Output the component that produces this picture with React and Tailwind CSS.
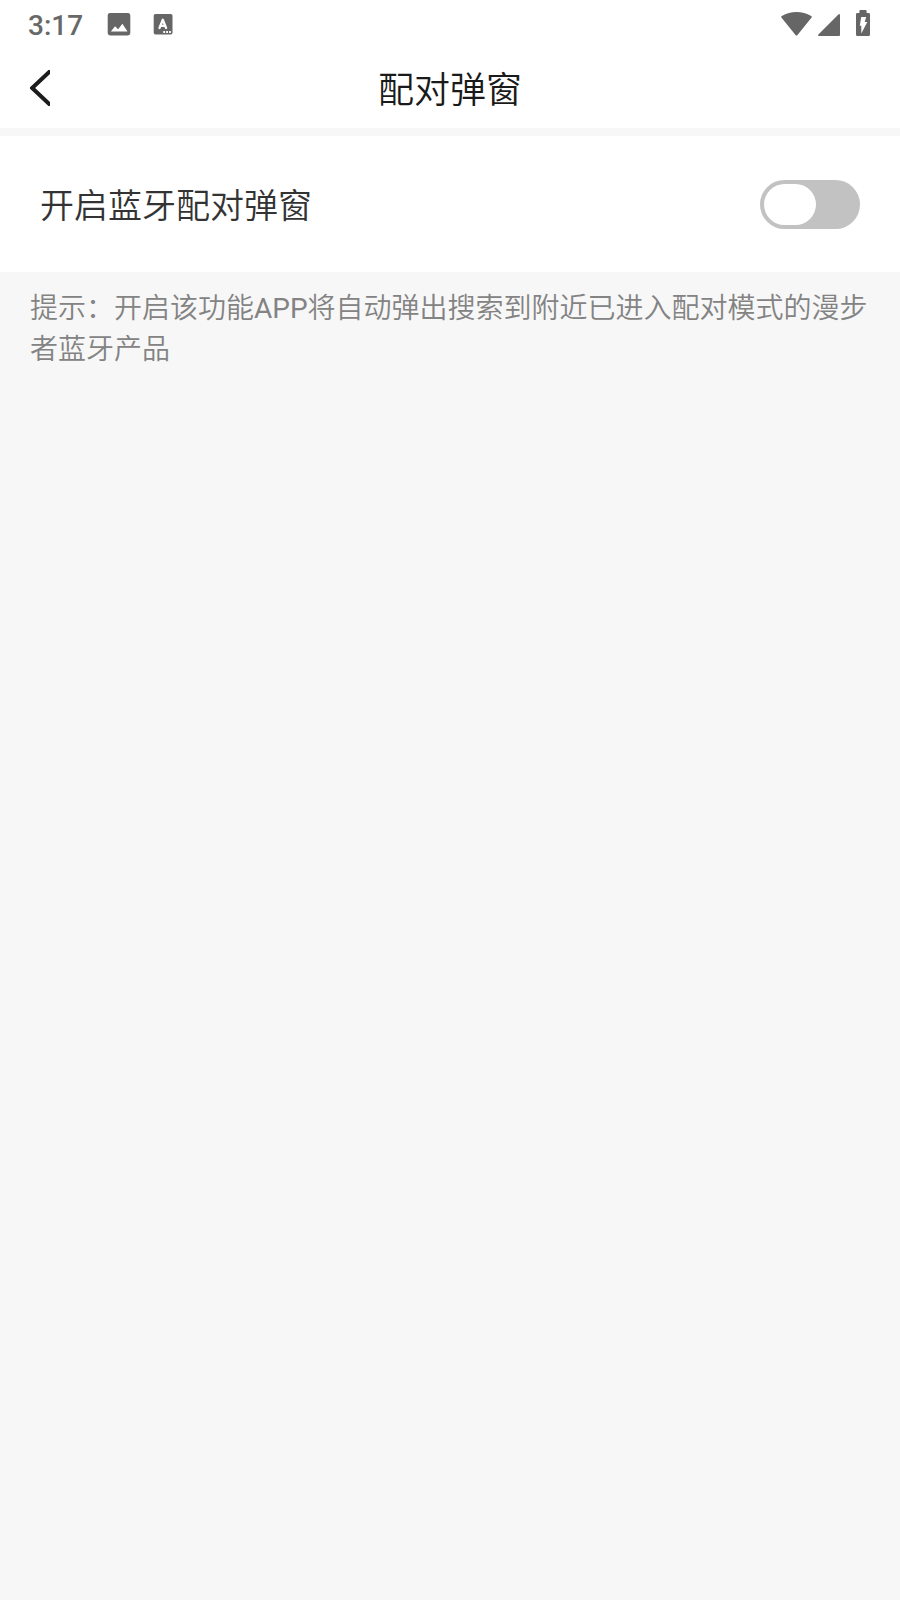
import { useState } from "react";

function ImageIcon() {
  return (
    <svg className="h-[23px] w-6" viewBox="-0.7 0 24 23">
      <rect width="22.6" height="22.4" y="0" rx="2.4" fill="#666666" />
      <path d="M3.1 18.5 L7.4 13.2 L10.4 16.3 L14.7 10.8 L19.8 18.5 Z" fill="#ffffff" />
    </svg>
  );
}

function KeyboardIcon() {
  return (
    <svg className="h-[21px] w-5" viewBox="-0.7 0 20 21">
      <rect width="18.8" height="20.6" rx="1.8" fill="#666666" />
      <path
        d="M5.8 14 L9.1 5.8 L12.4 14 M7.2 11.8 H11"
        fill="none"
        stroke="#ffffff"
        strokeWidth="2.3"
        strokeLinejoin="round"
        strokeLinecap="round"
      />
      <path d="M9.6 17.1h1.8v1.8h-1.8z M12.5 17.1h1.8v1.8h-1.8z M15.4 17.1h1.8v1.8h-1.8z" fill="#ffffff" />
    </svg>
  );
}

function WifiIcon() {
  return (
    <svg className="h-6 w-[31px]" viewBox="0 0 31 24">
      <path
        d="M0.6 5.8 C-0.1 5.1 0 4.4 0.8 3.9 C9.6 -1.3 21.4 -1.3 30.2 3.9 C31 4.4 31.1 5.1 30.4 5.8 L16.5 23 Q15.5 24.2 14.5 23 Z"
        fill="#666666"
      />
    </svg>
  );
}

function SignalIcon() {
  return (
    <svg className="h-[22px] w-[22px]" viewBox="0 0 22 22">
      <path d="M22 1 V21 Q22 22 21 22 H1 Q-0.6 21.8 0.4 20.4 L20.4 0.4 Q21.6 -0.4 22 1 Z" fill="#666666" />
    </svg>
  );
}

function BatteryIcon() {
  return (
    <svg className="h-[26px] w-[14px]" viewBox="0 0 14 26">
      <path
        d="M3.4 3 V1 Q3.4 0 4.4 0 H9.6 Q10.6 0 10.6 1 V3 H12.6 Q14 3 14 4.4 V24.4 Q14 26 12.6 26 H1.4 Q0 26 0 24.4 V4.4 Q0 3 1.4 3 Z"
        fill="#666666"
      />
      <path d="M5.2 7 H10.2 L8.7 12.1 H11.3 L5.3 23.4 V15.8 H3.8 Z" fill="#ffffff" />
    </svg>
  );
}

export default function App() {
  const [activado, setActivado] = useState(false);

  return (
    <div className="min-h-screen bg-[#f7f7f7] font-['Roboto','Noto_Sans_CJK_SC',sans-serif]">
      <header className="bg-white h-32">
        {/* Barra de estado */}
        <div className="flex h-12 items-start justify-between pl-7 pr-[30px]">
          <div className="flex items-start">
            <span className="w-[79px] pt-[10px] text-[28px] leading-8 font-[480] text-[#686868]">
              3:17
            </span>
            <div className="mt-[13px] flex items-start">
              <ImageIcon />
              <div className="mt-px ml-[22px]">
                <KeyboardIcon />
              </div>
            </div>
          </div>
          <div className="flex h-9 items-end">
            <WifiIcon />
            <div className="ml-[6px]">
              <SignalIcon />
            </div>
            <div className="ml-4">
              <BatteryIcon />
            </div>
          </div>
        </div>

        {/* Título */}
        <div className="grid h-20 grid-cols-[1fr_auto_1fr] items-center">
          <button type="button" aria-label="返回" className="ml-[30px] w-5">
            <svg className="h-9 w-5" viewBox="0 0 20 36">
              <path d="M21 0.3 L2.2 18 L21 35.7" fill="none" stroke="#1c1c1c" strokeWidth="4" />
            </svg>
          </button>
          <h1 className="pt-[5px] text-[36px] leading-[52px] font-[350] text-[#1a1a1a]">配对弹窗</h1>
        </div>
      </header>

      <section className="mt-2 flex h-[136px] items-center justify-between bg-white px-10">
        <span className="pt-[3px] text-[34px] leading-[50px] font-[350] text-[#333333]">
          开启蓝牙配对弹窗
        </span>
        <button
          type="button"
          role="switch"
          aria-checked={activado}
          onClick={() => setActivado(!activado)}
          className={`flex h-[49px] w-[100px] items-center rounded-full p-1 ${
            activado ? "justify-end bg-green-500" : "bg-[#c2c2c2]"
          }`}
        >
          <span className="h-[41px] w-[52px] rounded-full bg-white" />
        </button>
      </section>

      <p className="px-[30px] pt-4 font-['Roboto','Noto_Sans_CJK_SC_DemiLight','Noto_Sans_CJK_SC',sans-serif] text-[28px] leading-[41px] text-[#838383]">
        提示：开启该功能APP将自动弹出搜索到附近已进入配对模式的漫步者蓝牙产品
      </p>
    </div>
  );
}
